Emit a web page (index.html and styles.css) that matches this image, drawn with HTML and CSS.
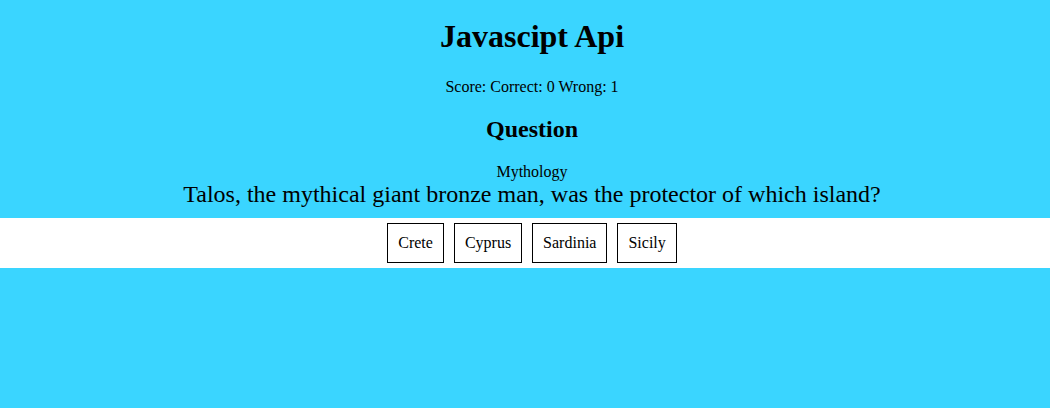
FILE: index.html
```html
<!DOCTYPE html>
<html>
<head>
<meta charset="utf-8">
<link rel="stylesheet" href="styles.css">
</head>
<body>
<div class="page">
  <h1 class="title">Javascipt Api</h1>
  <p class="score">Score: Correct: 0 Wrong: 1</p>
  <h2 class="heading">Question</h2>
  <div class="category">Mythology</div>
  <div class="question">Talos, the mythical giant bronze man, was the protector of which island?</div>
  <div class="answers">
    <button class="answer">Crete</button>
    <button class="answer">Cyprus</button>
    <button class="answer">Sardinia</button>
    <button class="answer">Sicily</button>
  </div>
</div>
</body>
</html>
```

FILE: styles.css
```css
html, body {
  margin: 0;
  padding: 0;
  background: #3ad5ff;
  font-family: "Liberation Serif", "Times New Roman", serif;
  color: #000;
}
.page {
  text-align: center;
  padding-top: 1px;
}
.title,
.score,
.heading,
.category,
.question {
  padding-left: 14px;
}
.title {
  font-size: 32px;
  font-weight: bold;
  margin: 17px 0 0;
  line-height: 37px;
}
.score {
  font-size: 16px;
  margin: 23px 0 0;
  line-height: 18px;
}
.heading {
  font-size: 24px;
  font-weight: bold;
  margin: 19px 0 0;
  line-height: 28px;
}
.category {
  font-size: 16px;
  margin-top: 20px;
  line-height: 18px;
}
.question {
  font-size: 24px;
  line-height: 26px;
}
.answers {
  background: #fff;
  display: flex;
  justify-content: center;
  gap: 10px;
  padding: 5px 0 5px 14px;
  margin-top: 11px;
}
.answer {
  font-family: "Liberation Serif", "Times New Roman", serif;
  font-size: 16px;
  line-height: 18px;
  padding: 10px;
  background: #fff;
  border: 1px solid #000;
  color: #000;
  border-radius: 0;
  margin: 0;
}
```
